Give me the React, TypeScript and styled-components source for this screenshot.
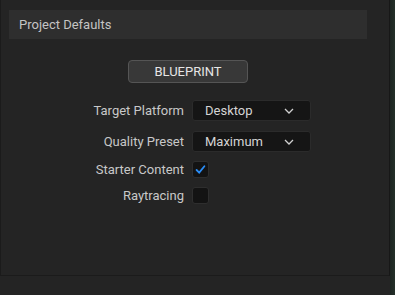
import styled, { createGlobalStyle } from 'styled-components';

const GlobalStyle = createGlobalStyle`
  html, body {
    margin: 0;
    padding: 0;
    background: #242424;
  }

  body {
    font-family: Roboto, 'Liberation Sans', sans-serif;
  }
`;

const Chevron = () => (
  <svg width="10" height="6" viewBox="0 0 10 6">
    <path d="M1 1 L5 5 L9 1" fill="none" stroke="#d0d0d0" strokeWidth="1.3" />
  </svg>
);

const Check = () => (
  <svg width="13" height="13" viewBox="0 0 13 13">
    <path d="M2.6 7 L5.2 9.6 L10.4 3.2" fill="none" stroke="#2a8cf5" strokeWidth="1.8" strokeLinecap="round" />
  </svg>
);

const App = () => {
  return (
    <>
      <GlobalStyle />
      <Window>
        <Panel>
          <Header>Project Defaults</Header>
          <Body>
            <Button>BLUEPRINT</Button>
            <Form>
              <Label>Target Platform</Label>
              <Dropdown>
                <span>Desktop</span>
                <Chevron />
              </Dropdown>
              <Label spacing="10px">Quality Preset</Label>
              <Dropdown spacing="10px">
                <span>Maximum</span>
                <Chevron />
              </Dropdown>
              <Label spacing="9px">Starter Content</Label>
              <Checkbox spacing="9px">
                <Check />
              </Checkbox>
              <Label spacing="9px">Raytracing</Label>
              <Checkbox spacing="9px" />
            </Form>
          </Body>
        </Panel>
        <Strip />
      </Window>
    </>
  );
};

export default App;

interface SpacingProps {
  spacing?: string;
}

const Window = styled.div`
  display: flex;

  width: 395px;
  height: 295px;

  background-color: #242424;
`;

const Panel = styled.div`
  display: flex;
  flex-direction: column;

  width: 359px;
  height: 265px;

  padding: 10px 22px 0 8px;

  border-left: 1px solid #1b1b1b;
  border-right: 1px solid #171717;
  border-bottom: 1px solid #1b1b1b;
`;

const Strip = styled.div`
  width: 5px;
  height: 295px;

  background: linear-gradient(90deg, #1d2522, #243029);
`;

const Header = styled.div`
  display: flex;
  align-items: center;

  height: 29px;
  padding-left: 10px;

  background-color: #2e2e2e;

  font-size: 13px;
  color: #c4c4c4;
`;

const Body = styled.div`
  display: flex;
  flex-direction: column;
  align-items: center;

  padding-top: 21px;
`;

const Button = styled.button`
  width: 120px;
  height: 23px;

  background-color: #383838;

  border: 1px solid #555555;
  border-radius: 4px;

  font-family: Roboto, 'Liberation Sans', sans-serif;
  font-size: 13px;
  color: #e6e6e6;
`;

const Form = styled.div`
  display: grid;
  grid-template-columns: 175px 119px;
  align-items: center;
  column-gap: 8px;

  align-self: flex-start;
  margin-top: 17px;
`;

const Label = styled.div<SpacingProps>`
  margin-top: ${(props) => props.spacing || '0'};

  text-align: right;
  font-size: 13px;
  color: #c8c8c8;
`;

const Dropdown = styled.div<SpacingProps>`
  display: flex;
  align-items: center;
  justify-content: space-between;

  height: 21px;
  margin-top: ${(props) => props.spacing || '0'};
  padding: 0 16px 0 12px;
  box-sizing: border-box;

  background-color: #151515;

  border: 1px solid #2b2b2b;
  border-radius: 3px;

  font-size: 13px;
  color: #d4d4d4;
`;

const Checkbox = styled.div<SpacingProps>`
  display: flex;
  align-items: center;
  justify-content: center;

  width: 17px;
  height: 17px;
  margin-top: ${(props) => props.spacing || '0'};
  box-sizing: border-box;

  background-color: #131313;

  border: 1px solid #2e2e2e;
  border-radius: 3px;
`;
